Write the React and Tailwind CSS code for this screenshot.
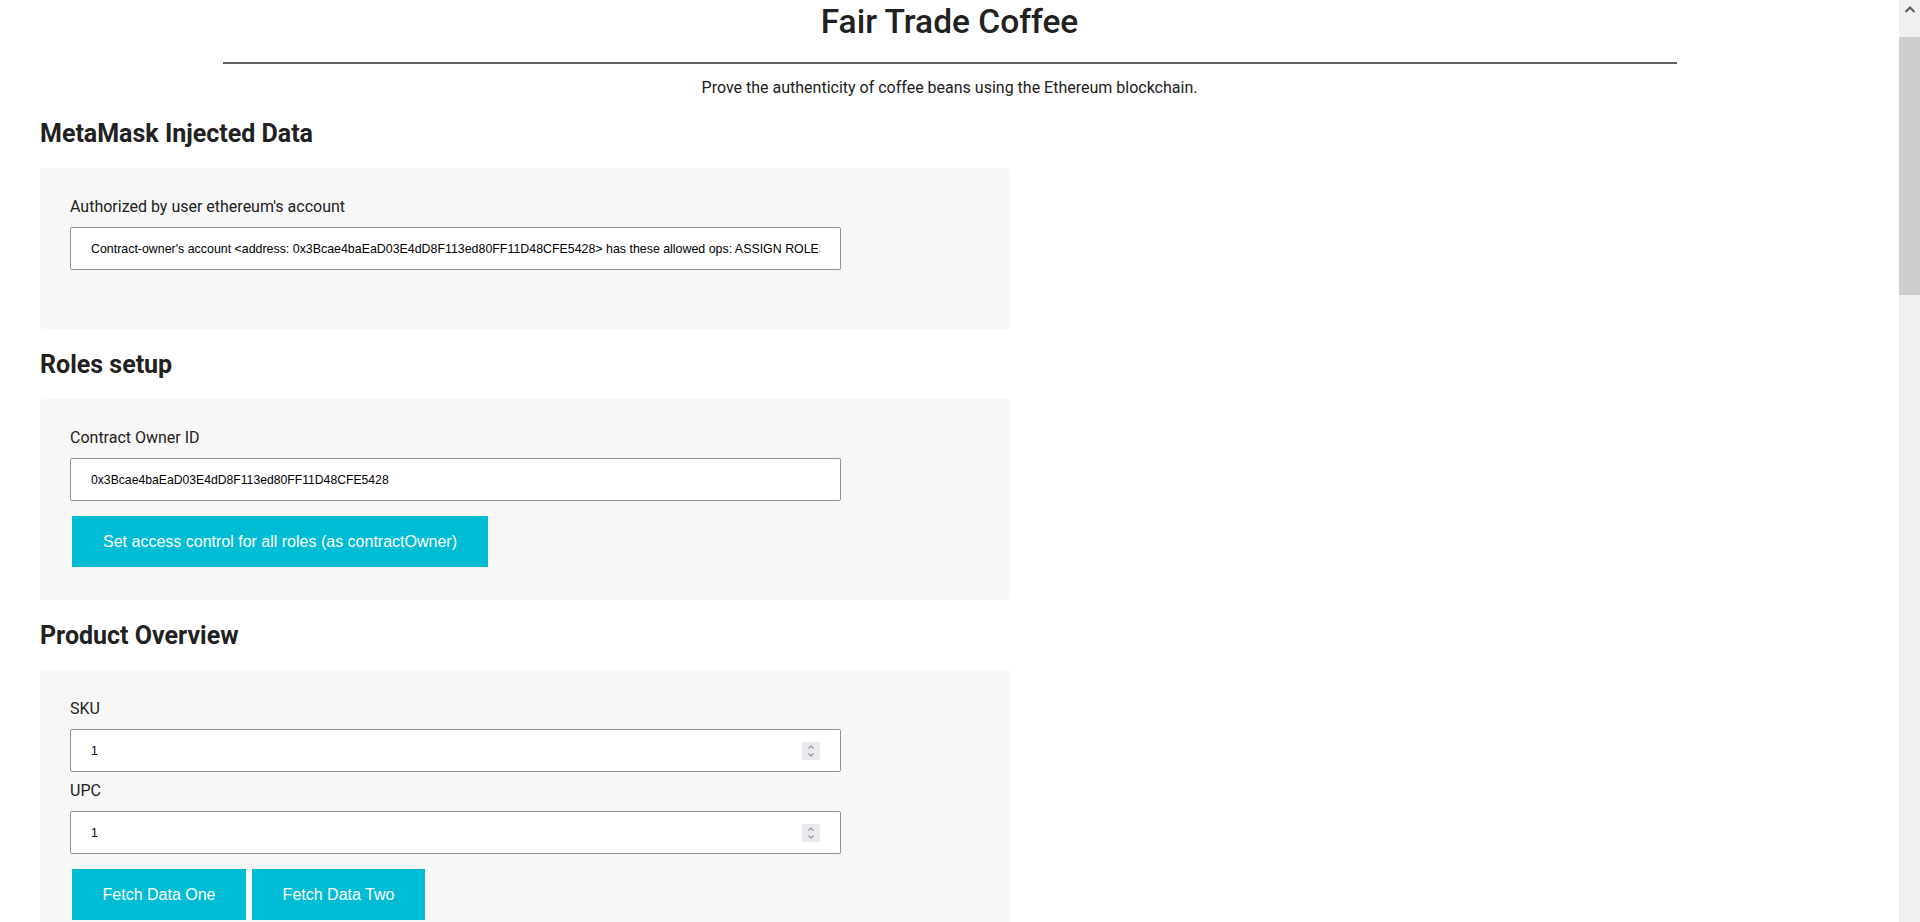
import React from "react";

const ADDR = "0x3Bcae4baEaD03E4dD8F113ed80FF11D48CFE5428";
const OPS =
  "Contract-owner's account <address: " +
  ADDR +
  "> has these allowed ops: ASSIGN ROLES, ADD FARMER, ADD DISTRIBUTOR, ADD RETAILER, ADD CONSUMER";

function Spinner() {
  return (
    <div className="pointer-events-none absolute right-[21px] top-1/2 flex h-[18px] w-[18px] -translate-y-1/2 items-center justify-center rounded-[2px] bg-[#e9e9ed]">
      <svg width="18" height="18" viewBox="0 0 18 18" fill="none">
        <polyline points="6.5,6.5 9,4 11.5,6.5" stroke="#8f8f9d" strokeWidth="1.1" />
        <polyline points="6.5,11.5 9,14 11.5,11.5" stroke="#8f8f9d" strokeWidth="1.1" />
      </svg>
    </div>
  );
}

function Field({ label, value = "", number = false, first = false, size = "text-[12.2px]" }) {
  return (
    <div className={first ? "" : "mt-[7px]"}>
      <label className="block text-[16px] leading-[24px] text-[#212121]">{label}</label>
      <div className="relative mt-[8px] w-[771px]">
        <input
          readOnly
          value={value}
          className={`block h-[43px] w-full rounded-[2px] border border-[#8f8f9d] bg-white px-[20px] font-['Liberation_Sans',sans-serif] ${size} text-black outline-none`}
        />
        {number && <Spinner />}
      </div>
    </div>
  );
}

function Btn({ children, w }) {
  return (
    <button
      className={`ml-[2px] h-[51px] ${w} bg-[#00bcd4] font-['Liberation_Sans',sans-serif] text-[16px] text-white`}
    >
      {children}
    </button>
  );
}

function Heading({ children, first = false }) {
  return (
    <h2
      className={`${first ? "mt-[19px]" : "mt-[21px]"} mb-[19px] text-[25px] font-bold leading-[30px] text-[#212121]`}
    >
      {children}
    </h2>
  );
}

function Box({ children, pb = "pb-[33px]" }) {
  return <div className={`w-[970px] rounded-[4px] bg-[#f7f7f7] pl-[30px] pt-[27px] ${pb}`}>{children}</div>;
}

function ScrollBar() {
  return (
    <div className="flex h-full w-[21px] shrink-0 flex-col bg-[#f0f0f0]">
      <div className="flex h-[37px] justify-center pt-[5px]">
        <svg width="12" height="8" viewBox="0 0 12 8" fill="none">
          <polyline points="1.5,7 6,2.5 10.5,7" stroke="#606060" strokeWidth="2.2" />
        </svg>
      </div>
      <div className="h-[258px] bg-[#cdcdcd]" />
    </div>
  );
}

export default function App() {
  return (
    <div className="flex h-screen w-full overflow-hidden bg-white font-['Roboto',sans-serif]">
      <div className="h-full min-w-0 flex-1 overflow-hidden">
        <div className="pb-[9px]">
          <h1 className="pt-[3px] text-center text-[33.5px] font-medium leading-[38px] text-[#212121]">
            Fair Trade Coffee
          </h1>
          <div className="mx-auto mt-[21px] h-[2px] w-[1454px] bg-[#5f5f5f]" />
          <p className="mt-[12px] text-center text-[16px] leading-[24px] text-[#212121]">
            Prove the authenticity of coffee beans using the Ethereum blockchain.
          </p>

          <div className="pl-[40px]">
            <Heading first>MetaMask Injected Data</Heading>
            <Box pb="pb-[59px]">
              <Field first label="Authorized by user ethereum's account" value={OPS} size="text-[12.4px]" />
            </Box>

            <Heading>Roles setup</Heading>
            <Box>
              <Field first label="Contract Owner ID" value={ADDR} />
              <div className="mt-[15px] flex">
                <Btn w="w-[416px]">Set access control for all roles (as contractOwner)</Btn>
              </div>
            </Box>

            <Heading>Product Overview</Heading>
            <Box>
              <Field first label="SKU" value="1" number />
              <Field label="UPC" value="1" number />
              <div className="mt-[15px] flex gap-[4px]">
                <Btn w="w-[174px]">Fetch Data One</Btn>
                <Btn w="w-[173px]">Fetch Data Two</Btn>
              </div>
              <div className="mt-[15px]">
                <Field first label="Current Owner ID" value={ADDR} />
                <Field label="Origin Farmer ID" value={ADDR} />
                <Field label="Origin Farm Name" value="John Doe" />
                <Field label="Origin Farm Information" value="Yarray Valley" />
                <Field label="Origin Farm Latitude" value="-38.239770" />
                <Field label="Origin Farm Longitude" value="144.341490" />
              </div>
            </Box>

            <Heading>Farm Details</Heading>
            <Box>
              <Field first label="Farmer ID" value={ADDR} />
              <Field label="Farm Name" value="John Doe" />
              <Field label="Farm Information" value="Yarray Valley" />
              <Field label="Farm Latitude" value="-38.239770" />
              <Field label="Farm Longitude" value="144.341490" />
              <div className="mt-[15px] flex gap-[4px]">
                <Btn w="w-[120px]">Harvest</Btn>
                <Btn w="w-[120px]">Process</Btn>
                <Btn w="w-[120px]">Pack</Btn>
                <Btn w="w-[120px]">ForSale</Btn>
              </div>
            </Box>

            <Heading>Product Details</Heading>
            <Box>
              <Field first label="Product Notes" value="Best beans for Espresso" />
              <Field label="Product Price" value="1" number />
              <Field label="Distributor ID" value={ADDR} />
              <Field label="Retailer ID" value={ADDR} />
              <Field label="Consumer ID" value={ADDR} />
              <div className="mt-[15px] flex gap-[4px]">
                <Btn w="w-[120px]">Buy</Btn>
                <Btn w="w-[120px]">Ship</Btn>
                <Btn w="w-[120px]">Receive</Btn>
                <Btn w="w-[120px]">Purchase</Btn>
              </div>
            </Box>

            <Heading>Transaction History</Heading>
            <Box>
              <label className="block text-[16px] leading-[24px] text-[#212121]">Transactions</label>
              <div className="mt-[8px] h-[200px] w-[771px] rounded-[2px] border border-[#8f8f9d] bg-white" />
            </Box>
          </div>
        </div>
      </div>
      <ScrollBar />
    </div>
  );
}
